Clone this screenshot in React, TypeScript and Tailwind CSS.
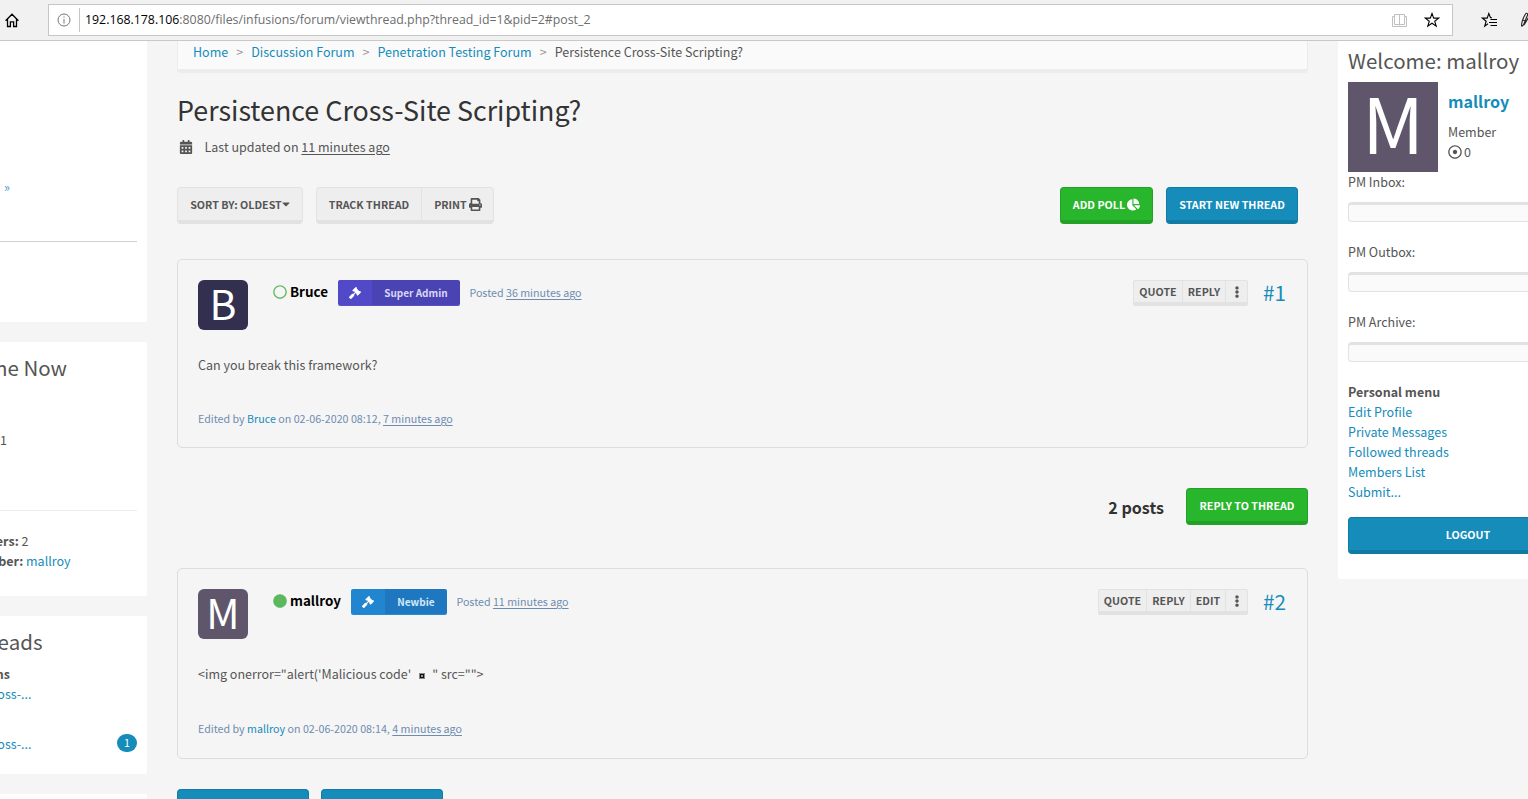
import type { ReactNode } from "react";
import {
  FaCalendarAlt,
  FaCaretDown,
  FaChartPie,
  FaCircle,
  FaEllipsisV,
  FaGavel,
  FaPrint,
  FaRegCircle,
  FaRegDotCircle,
} from "react-icons/fa";

function BrowserBar() {
  return (
    <header className="flex h-[41px] shrink-0 items-center overflow-hidden border-b border-[#c8c8c8] bg-[#f1f1f1]">
      <svg className="ml-[5px] h-[15px] w-[15px] shrink-0" viewBox="0 0 15 15" fill="none" stroke="#000" strokeWidth="1.3">
        <path d="M0.600 7.800 7 1.300l6.400 6.500M2.500 6.200v7.300h2.900V8.800h3.200v4.700h2.900V6.200" />
      </svg>
      <div className="ml-[28px] flex h-[32px] w-[1405px] shrink-0 items-center border border-[#c6c6c6] bg-white">
        <svg className="ml-[8px] h-[14px] w-[14px]" viewBox="0 0 14 14" fill="none" stroke="#767676">
          <circle cx="7" cy="7" r="6" />
          <path d="M7 6v4.500M7 3.500v1.200" />
        </svg>
        <div className="ml-[8px] h-[24px] w-px bg-[#c6c6c6]" />
        <div className="ml-[5px] whitespace-nowrap font-['Open_Sans','Noto_Sans',sans-serif] text-[12.340px] leading-5 text-[#6d6d6d]">
          <span className="text-black">192.168.178.106</span>:8080/files/infusions/forum/viewthread.php?thread_id=1&amp;pid=2#post_2
        </div>
        <svg className="ml-auto h-[15px] w-[15px]" viewBox="0 0 15 15" fill="none" stroke="#c0c0c0">
          <path d="M7.500 1.500v11M2.500 1.500h10v10h-10zM2.500 3.500h-2v10h14v-10h-2" />
        </svg>
        <svg className="mr-[12px] ml-[17px] h-[16px] w-[16px]" viewBox="0 0 16 16" fill="none" stroke="#000" strokeWidth="1.100">
          <path d="M8 1.500 9.700 6.100h5L10.700 9.200l1.500 4.900L8 11.200l-4.200 2.900 1.500-4.900-4-3.100h5z" />
        </svg>
      </div>
      <svg className="ml-[28px] h-[16px] w-[17px] shrink-0" viewBox="0 0 17 16" fill="none" stroke="#000" strokeWidth="1.100">
        <path d="M11 5.800H9.500L7.800 1.500 6.200 6.100H1.300L5.200 9.200l-1.500 4.900L7 11.800" />
        <path d="M9.500 7.500h6.500M8 10.500h8M9.500 13.500h6.500" />
      </svg>
      <svg className="ml-[22px] h-[16px] w-[16px] shrink-0" viewBox="0 0 16 16" fill="none" stroke="#222" strokeWidth="1.100">
        <path d="M1.500 14c0-3 1.500-8 4-12 1-1.500 2.500-.5 2 1L3.500 13l-2 1.500M3 8l3 1.500M4 13l6-10" />
      </svg>
    </header>
  );
}

/* Left column scrolled partly out of view: content keeps its right edge. */
function Cut({ className, children }: { className: string; children: ReactNode }) {
  return <div className={"flex justify-end overflow-hidden whitespace-pre " + className}>{children}</div>;
}

function LeftSidebar() {
  return (
    <aside className="flex w-[147px] shrink-0 flex-col gap-5">
      <section className="h-[281px] shrink-0 rounded-br-[2px] bg-white pt-[136px]">
        <Cut className="w-[10px] text-[#3b9aca]">»</Cut>
        <div className="mt-[44px] mr-[10px] h-px bg-[#d0d0d0]" />
      </section>
      <section className="h-[254px] shrink-0 rounded-r-[2px] bg-white pt-[13px]">
        <Cut className="w-[67px] text-[20.500px] leading-6">Users Online Now</Cut>
        <Cut className="mt-[51px] w-[7px]">Online: 1</Cut>
        <div className="mt-[60px] mr-[10px] h-px bg-[#ececec]" />
        <Cut className="mt-[20px] w-[28.500px]">
          <b>Total Members: </b>2
        </Cut>
        <Cut className="w-[70.500px]">
          <b>Newest Member: </b>
          <span className="text-[#158cba]">mallroy</span>
        </Cut>
      </section>
      <section className="h-[158px] shrink-0 rounded-r-[2px] bg-white pt-[13px]">
        <Cut className="w-[42.500px] text-[20.500px] leading-6">Forum Threads</Cut>
        <Cut className="mt-[11px] w-[10px] font-bold">Discussions</Cut>
        <Cut className="w-[31.500px] text-[#158cba]">Persistence Cross-...</Cut>
        <div className="mt-[30px] flex items-start justify-between pr-[10px]">
          <Cut className="w-[31.500px] text-[#158cba]">Persistence Cross-...</Cut>
          <span className="flex h-[18px] w-[20px] items-center justify-center rounded-full bg-[#158cba] text-[10.700px] text-white">1</span>
        </div>
      </section>
      <section className="h-[40px] shrink-0 rounded-tr-[2px] bg-white" />
    </aside>
  );
}

const btn = "flex h-[37px] items-center justify-center whitespace-nowrap rounded-[4px] border border-b-4 text-[10.700px] font-bold leading-none ";
const grey = "border-[#e2e2e2] bg-[#eeeeee] text-[#555555] ";
const green = "border-[#23a127] bg-[#28b62c] text-white ";
const blue = "border-[#127ba3] bg-[#158cba] text-white ";

type PostProps = {
  letter: string;
  avatar: string;
  online: boolean;
  name: string;
  rank: string;
  badge: string;
  rankStyle: string;
  iconStyle: string;
  posted: string;
  actions: { label: string; width: string }[];
  number: string;
  height: string;
  body: ReactNode;
  footer: string;
  editedAt: string;
  editedAgo: string;
};

function Post(p: PostProps) {
  return (
    <article className={"shrink-0 rounded-[5px] border border-[#dddddd] p-[20px] " + p.height}>
      <div className="flex h-[50px] items-start">
        <div className={"flex h-[50px] w-[50px] shrink-0 items-center justify-center rounded-[6px] text-[41px] leading-none text-white " + p.avatar}>
          <span className="-mt-[6px]">{p.letter}</span>
        </div>
        <div className="ml-[25px] flex h-[26px] items-center">
          {p.online ? (
            <FaCircle className="-mt-[2px] h-[14px] w-[14px] text-[#5cb85c]" />
          ) : (
            <FaRegCircle className="-mt-[2px] h-[14px] w-[14px] text-[#5cb85c]" />
          )}
          <span className="-mt-[4px] ml-[3px] text-[13.400px] font-bold text-black">{p.name}</span>
          <div className={"ml-[10px] flex h-[26px] items-stretch overflow-hidden rounded-[2px] " + p.badge}>
            <span className={"flex w-[34px] items-center justify-center text-white " + p.iconStyle}>
              <FaGavel className="h-[12px] w-[12px]" />
            </span>
            <span className={"flex items-center justify-center pt-px text-[10px] font-bold " + p.rankStyle}>{p.rank}</span>
          </div>
          <span className="ml-[9.500px] text-[10.700px] whitespace-pre text-[#6e8cb0]">
            Posted <span className="underline underline-offset-2">{p.posted}</span>
          </span>
        </div>
        <div className="ml-auto flex h-[26px] overflow-hidden rounded-[2px] border border-b-4 border-[#e2e2e2] bg-[#eeeeee] text-[10.700px] leading-none font-bold">
          {p.actions.map((a) => (
            <span key={a.label} className={"flex items-center justify-center border-r border-[#e2e2e2] pt-[2px] " + a.width}>
              {a.label}
            </span>
          ))}
          <span className="flex w-[21px] items-center justify-center">
            <FaEllipsisV className="h-[12px] w-[12px]" />
          </span>
        </div>
        <span className="ml-[15px] w-[24px] text-[20.700px] leading-[25px] whitespace-nowrap text-[#158cba]">{p.number}</span>
      </div>
      <p className="mt-[25px] whitespace-pre">{p.body}</p>
      <p className={"text-[10.700px] whitespace-pre text-[#6e8cb0] " + p.footer}>
        Edited by <span className="text-[#158cba]">{p.name}</span> on {p.editedAt},{" "}
        <span className="underline underline-offset-2">{p.editedAgo}</span>
      </p>
    </article>
  );
}

function Thread() {
  return (
    <main className="ml-[30px] flex w-[1131px] shrink-0 flex-col">
      <nav className="flex h-[32px] shrink-0 items-start rounded-b-[4px] border-x border-b-4 border-[#ececec] bg-[#fafafa] pt-px pl-[15px] whitespace-pre">
        <span className="text-[#158cba]">Home</span>
        <span className="w-[23px] text-center text-[#999999]">&gt;</span>
        <span className="text-[#158cba]">Discussion Forum</span>
        <span className="w-[23px] text-center text-[#999999]">&gt;</span>
        <span className="text-[#158cba]">Penetration Testing Forum</span>
        <span className="w-[23px] text-center text-[#999999]">&gt;</span>
        <span>Persistence Cross-Site Scripting?</span>
      </nav>
      <h1 className="mt-[20px] text-[26.850px] leading-[34px] text-[#333333]">Persistence Cross-Site Scripting?</h1>
      <div className="mt-[10px] flex items-center whitespace-pre">
        <FaCalendarAlt className="ml-[2px] h-[14px] w-[14px]" />
        <span className="ml-[11.500px]">
          Last updated on <span className="underline underline-offset-2">11 minutes ago</span>
        </span>
      </div>
      <div className="mt-[30px] flex pr-[10px]">
        <div className={btn + grey + "w-[126px]"}>
          <span className="pt-[2px]">SORT BY: OLDEST</span>
          <FaCaretDown className="h-[12px] w-[8px]" />
        </div>
        <div className={btn + grey + "ml-[13px] w-[178px]"}>
          <span className="flex h-full w-[105px] items-center justify-center border-r border-[#e2e2e2] pt-[2px]">TRACK THREAD</span>
          <span className="flex flex-1 items-center justify-center gap-[2px] pl-px">
            <span className="pt-[2px]">PRINT</span>
            <FaPrint className="h-[13px] w-[13px]" />
          </span>
        </div>
        <div className={btn + green + "ml-auto w-[93px] gap-[2px]"}>
          <span className="pt-[2px]">ADD POLL</span>
          <FaChartPie className="h-[13px] w-[13px]" />
        </div>
        <div className={btn + blue + "ml-[13px] w-[132px] pt-[2px]"}>START NEW THREAD</div>
      </div>
      <div className="h-[35px] shrink-0" />
      <Post
        letter="B"
        avatar="bg-[#33304f]"
        online={false}
        name="Bruce"
        rank="Super Admin"
        badge="border-b border-[#5a50c8]"
        iconStyle="bg-[#5149c8]"
        rankStyle="w-[88px] bg-[#4a43b4] text-[#d8d5f5]"
        posted="36 minutes ago"
        actions={[
          { label: "QUOTE", width: "w-[49px]" },
          { label: "REPLY", width: "w-[43px]" },
        ]}
        number="#1"
        height="h-[189px]"
        body="Can you break this framework?"
        footer="mt-[34px]"
        editedAt="02-06-2020 08:12"
        editedAgo="7 minutes ago"
      />
      <div className="mt-[40px] flex items-center justify-end">
        <span className="mr-[22px] text-[16.100px] font-bold text-[#333333]">2 posts</span>
        <div className={btn + green + "w-[122px] pt-[2px]"}>REPLY TO THREAD</div>
      </div>
      <div className="h-[43px] shrink-0" />
      <Post
        letter="M"
        avatar="bg-[#60566b]"
        online
        name="mallroy"
        rank="Newbie"
        badge="border-b border-[#2a8ad4]"
        iconStyle="bg-[#2185d0]"
        rankStyle="w-[62px] bg-[#1f78bf] text-[#d5e8f8]"
        posted="11 minutes ago"
        actions={[
          { label: "QUOTE", width: "w-[48px]" },
          { label: "REPLY", width: "w-[44px]" },
          { label: "EDIT", width: "w-[35px]" },
        ]}
        number="#2"
        height="h-[191px]"
        body={
          <>
            {"<img onerror=\"alert('Malicious code'"}
            <svg className="mr-[7px] ml-[8px] inline h-[6px] w-[6px] align-[0px]" viewBox="0 0 6 6">
              <path d="M0 0h6v6H0z" fill="#888888" />
              <path d="M1 1h4v4H1z" fill="#111111" />
              <path d="M2 2h2v2H2z" fill="#999999" />
            </svg>
            {'" src="">'}
          </>
        }
        footer="mt-[35px]"
        editedAt="02-06-2020 08:14"
        editedAgo="4 minutes ago"
      />
      <div className="mt-[30px] flex gap-[12px]">
        <div className={btn + blue + "w-[132px]"} />
        <div className={btn + blue + "w-[122px]"} />
      </div>
    </main>
  );
}

function Meter({ label }: { label: string }) {
  return (
    <div className="mb-[20px]">
      <p>{label}</p>
      <div className="mt-[10px] h-[20px] rounded-[4px] border border-t-[3px] border-[#e2e2e2] bg-[#fafafa]" />
    </div>
  );
}

function UserPanel() {
  return (
    <aside className="ml-[30px] h-[538px] w-[260px] shrink-0 rounded-bl-[2px] bg-white px-[10px] pt-[7px]">
      <h2 className="text-[20.500px] leading-6 whitespace-nowrap">Welcome: mallroy</h2>
      <div className="mt-[10px] flex h-[90px]">
        <div className="flex h-[90px] w-[90px] items-center justify-center bg-[#60566b] text-[76px] leading-none text-white">
          <span className="-mt-[13px]">M</span>
        </div>
        <div className="ml-[10px] pt-[9px]">
          <p className="text-[16.100px] font-bold text-[#158cba]">mallroy</p>
          <p className="mt-[11px]">Member</p>
          <p className="flex items-center gap-[2px]">
            <FaRegDotCircle className="h-[14px] w-[14px]" />0
          </p>
        </div>
      </div>
      <Meter label="PM Inbox:" />
      <Meter label="PM Outbox:" />
      <Meter label="PM Archive:" />
      <p className="font-bold">Personal menu</p>
      {["Edit Profile", "Private Messages", "Followed threads", "Members List", "Submit..."].map((t) => (
        <p key={t} className="text-[#158cba]">
          {t}
        </p>
      ))}
      <div className={btn + blue + "mt-[15px] pt-[2px]"}>LOGOUT</div>
    </aside>
  );
}

export default function App() {
  return (
    <div className="flex h-[799px] w-[1528px] flex-col overflow-hidden bg-[#f5f5f5] font-['Noto_Sans_CJK_SC','Noto_Sans',sans-serif] text-[12.500px] leading-5 text-[#555555]">
      <BrowserBar />
      <div className="flex min-h-0 flex-1 overflow-hidden">
        <LeftSidebar />
        <Thread />
        <UserPanel />
      </div>
    </div>
  );
}
